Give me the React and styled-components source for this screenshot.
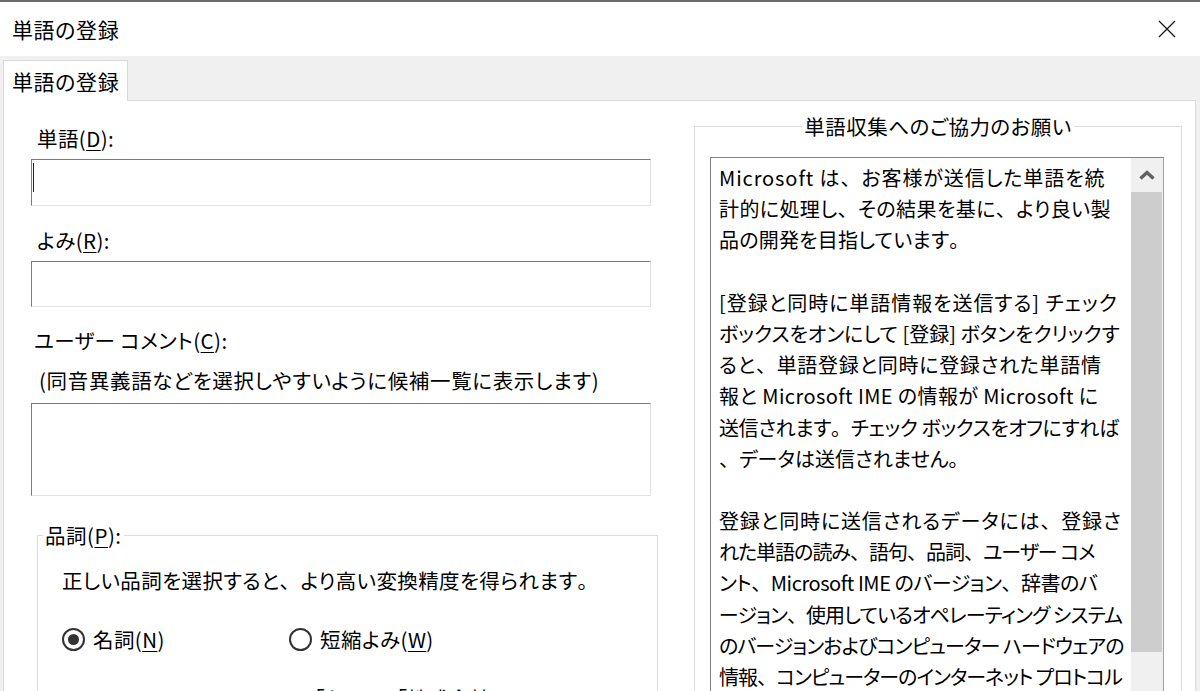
import React from "react";
import styled, { createGlobalStyle } from "styled-components";

const GlobalStyle = createGlobalStyle`
  html, body {
    margin: 0;
    padding: 0;
    background: #f0f0f0;
    overflow: hidden;
  }
  body {
    font-family: "Noto Sans CJK JP", "Noto Sans", sans-serif;
    font-feature-settings: "palt";
    color: #000;
  }
`;

const Window = styled.div`
  width: 1200px;
  height: 691px;
  overflow: hidden;
  display: flex;
  flex-direction: column;
  border-top: 2px solid #6b6b6b;
  box-sizing: border-box;
`;

const TitleBar = styled.div`
  height: 54px;
  flex: none;
  background: #fff;
  display: flex;
  align-items: center;
  justify-content: space-between;
  padding: 0 24px 0 12px;
  font-size: 21px;
  letter-spacing: 0.6px;
`;

const Body = styled.div`
  flex: 1;
  display: flex;
  flex-direction: column;
  padding: 4px 4px 0 3px;
  min-height: 0;
`;

const TabStrip = styled.div`
  display: flex;
  height: 40px;
  flex: none;
`;

const Tab = styled.div`
  width: 125px;
  box-sizing: border-box;
  background: #fff;
  border: 1px solid #d9d9d9;
  border-bottom: none;
  display: flex;
  align-items: center;
  padding-left: 8px;
  font-size: 21px;
  letter-spacing: 0.6px;
  position: relative;
  z-index: 1;
  margin-bottom: -1px;
`;

const Panel = styled.div`
  flex: 1;
  background: #fff;
  border: 1px solid #d9d9d9;
  border-bottom: none;
  display: grid;
  grid-template-columns: 627px 488px;
  column-gap: 36px;
  padding-left: 27px;
  overflow: hidden;
  font-size: 20.5px;
`;

/* full-width punctuation, as in the reference font */
const Punct = styled.span`
  font-feature-settings: normal;
`;

const jp = (text) =>
  text.split(/([、。])/).map((part, i) =>
    part === "、" || part === "。" ? <Punct key={i}>{part}</Punct> : part
  );

const LeftCol = styled.div`
  display: flex;
  flex-direction: column;
  padding-top: 22px;
`;

const Label = styled.div`
  line-height: 30px;
  height: 30px;
  padding-left: ${(p) => p.$indent || 6}px;
  margin-top: ${(p) => p.$top || 0}px;
  margin-bottom: ${(p) => p.$bottom || 0}px;
  white-space: nowrap;
  letter-spacing: ${(p) => p.$spacing || 0.4}px;
  u {
    text-decoration-thickness: 1px;
    text-underline-offset: 3px;
  }
`;

const TextBox = styled.div`
  width: 620px;
  height: ${(p) => p.$h}px;
  box-sizing: border-box;
  border-top: 1px solid #7a7a7a;
  border-left: 1px solid #7a7a7a;
  border-right: 1px solid #e3e3e3;
  border-bottom: 1px solid #e3e3e3;
  background: #fff;
  padding: 3px 1px;
`;

const Caret = styled.span`
  display: block;
  width: 1px;
  height: 29px;
  background: #222;
`;

const GroupBox = styled.fieldset`
  margin: ${(p) => p.$top}px 0 0 ${(p) => p.$left || 0}px;
  padding: 0;
  border: 1px solid #dcdcdc;
  min-width: 0;
`;

const Legend = styled.legend`
  line-height: 28px;
  padding: 0 2px;
  margin-left: ${(p) => (p.$center ? "auto" : "5px")};
  margin-right: ${(p) => (p.$center ? "auto" : "0")};
  white-space: nowrap;
  letter-spacing: 0.5px;
  u {
    text-decoration-thickness: 1px;
    text-underline-offset: 3px;
  }
`;

const GroupInner = styled.div`
  padding: 16px 0 0 24px;
`;

const Line = styled.div`
  line-height: 30px;
  white-space: nowrap;
  margin-top: ${(p) => p.$top || 0}px;
  padding-left: ${(p) => p.$indent || 0}px;
  letter-spacing: 0.4px;
`;

const RadioRow = styled.div`
  display: grid;
  grid-template-columns: 227px 1fr;
  margin-top: 29px;
`;

const RadioItem = styled.label`
  display: flex;
  align-items: center;
  gap: 8px;
  line-height: 30px;
  white-space: nowrap;
  letter-spacing: 0.4px;
  u {
    text-decoration-thickness: 1px;
    text-underline-offset: 3px;
  }
`;

const RadioCircle = styled.span`
  width: 23px;
  height: 23px;
  box-sizing: border-box;
  border-radius: 50%;
  border: 2px solid #333;
  display: flex;
  align-items: center;
  justify-content: center;
  &::after {
    content: "";
    width: 11px;
    height: 11px;
    border-radius: 50%;
    background: ${(p) => (p.$checked ? "#333" : "transparent")};
  }
`;

const RightCol = styled.div`
  display: flex;
  flex-direction: column;
  padding-top: 11px;
`;

const InfoInner = styled.div`
  padding: 17px 17px 0 15px;
`;

const InfoBox = styled.div`
  height: 560px;
  box-sizing: border-box;
  border-top: 1px solid #828282;
  border-left: 1px solid #828282;
  border-right: 1px solid #a0a0a0;
  display: grid;
  grid-template-columns: 1fr 32px;
`;

const InfoText = styled.div`
  padding: 4px 0 0 8px;
  overflow: hidden;
  font-size: 20px;
`;

const InfoLine = styled.div`
  line-height: 31.2px;
  height: 31.2px;
  white-space: nowrap;
  letter-spacing: ${(p) => p.$s || 0}px;
`;

const ScrollBar = styled.div`
  background: #f0f0f0;
  display: flex;
  flex-direction: column;
`;

const ScrollButton = styled.div`
  height: 34px;
  display: flex;
  align-items: center;
  justify-content: center;
  color: #606060;
`;

const ScrollThumb = styled.div`
  height: 460px;
  width: 31px;
  background: #cdcdcd;
`;

// s: letter spacing so each wrapped line ends where it does in the dialog
const infoLines = [
  { t: "Microsoft は、お客様が送信した単語を統", s: 0.9 },
  { t: "計的に処理し、その結果を基に、より良い製", s: 0.4 },
  { t: "品の開発を目指しています。", s: 0.2 },
  { t: "" },
  { t: "[登録と同時に単語情報を送信する] チェック", s: 0.95 },
  { t: "ボックスをオンにして [登録] ボタンをクリックす", s: 0 },
  { t: "ると、単語登録と同時に登録された単語情", s: 0.7 },
  { t: "報と Microsoft IME の情報が Microsoft に", s: 0.4 },
  { t: "送信されます。チェック ボックスをオフにすれば", s: -0.4 },
  { t: "、データは送信されません。", s: 0 },
  { t: "" },
  { t: "登録と同時に送信されるデータには、登録さ", s: 0.85 },
  { t: "れた単語の読み、語句、品詞、ユーザー コメ", s: -1 },
  { t: "ント、Microsoft IME のバージョン、辞書のバ", s: -0.45 },
  { t: "ージョン、使用しているオペレーティング システム", s: -0.9 },
  { t: "のバージョンおよびコンピューター ハードウェアの", s: -0.9 },
  { t: "情報、コンピューターのインターネット プロトコル", s: -1 },
  { t: "(IP) アドレスが含まれます。", s: 0 },
];

const CloseIcon = () => (
  <svg width="18" height="18" viewBox="0 0 18 18">
    <path d="M1 1 L17 17 M17 1 L1 17" stroke="#1a1a1a" strokeWidth="1.3" fill="none" />
  </svg>
);

const ChevronUp = () => (
  <svg width="16" height="10" viewBox="0 0 16 10">
    <path d="M1.5 8.5 L8 2.5 L14.5 8.5" stroke="currentColor" strokeWidth="3.4" fill="none" />
  </svg>
);

export default function App() {
  return (
    <>
      <GlobalStyle />
      <Window>
        <TitleBar>
          <span>単語の登録</span>
          <CloseIcon />
        </TitleBar>
        <Body>
          <TabStrip>
            <Tab>単語の登録</Tab>
          </TabStrip>
          <Panel>
            <LeftCol>
              <Label $bottom={6}>
                単語(<u>D</u>):
              </Label>
              <TextBox $h={47}>
                <Caret />
              </TextBox>
              <Label $top={19} $bottom={6}>
                よみ(<u>R</u>):
              </Label>
              <TextBox $h={46} />
              <Label $top={18} $indent={3}>
                ユーザー コメント(<u>C</u>):
              </Label>
              <Label $top={10} $bottom={8} $indent={8} $spacing={0.65}>
                (同音異義語などを選択しやすいように候補一覧に表示します)
              </Label>
              <TextBox $h={93} />
              <GroupBox $top={25} $left={6}>
                <Legend>
                  品詞(<u>P</u>):
                </Legend>
                <GroupInner>
                  <Line>{jp("正しい品詞を選択すると、より高い変換精度を得られます。")}</Line>
                  <RadioRow>
                    <RadioItem>
                      <RadioCircle $checked />
                      <span>
                        名詞(<u>N</u>)
                      </span>
                    </RadioItem>
                    <RadioItem>
                      <RadioCircle />
                      <span>
                        短縮よみ(<u>W</u>)
                      </span>
                    </RadioItem>
                  </RadioRow>
                  <Line $top={29} $indent={252}>
                    「かぶ」→「株式会社」
                  </Line>
                </GroupInner>
              </GroupBox>
            </LeftCol>
            <RightCol>
              <GroupBox $top={0}>
                <Legend $center>単語収集へのご協力のお願い</Legend>
                <InfoInner>
                  <InfoBox>
                    <InfoText>
                      {infoLines.map((line, i) => (
                        <InfoLine key={i} $s={line.s}>
                          {jp(line.t)}
                        </InfoLine>
                      ))}
                    </InfoText>
                    <ScrollBar>
                      <ScrollButton>
                        <ChevronUp />
                      </ScrollButton>
                      <ScrollThumb />
                    </ScrollBar>
                  </InfoBox>
                </InfoInner>
              </GroupBox>
            </RightCol>
          </Panel>
        </Body>
      </Window>
    </>
  );
}
